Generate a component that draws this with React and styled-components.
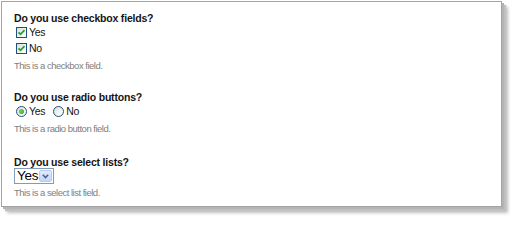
import React from "react";
import styled, { createGlobalStyle } from "styled-components";

const Global = createGlobalStyle`
  html, body { margin: 0; padding: 0; background: #ffffff; }
  body { font-family: "Liberation Sans", Arial, sans-serif; }
`;

const Page = styled.div`
  width: 511px;
  height: 216px;
  padding: 1px 0 0 1px;
  box-sizing: border-box;
  background: #fff;
`;

const Panel = styled.div`
  box-sizing: border-box;
  width: 501px;
  height: 206px;
  background: #fff;
  border: 1px solid #a4a4a4;
  box-shadow: 2px 2px 0 #b4b4b4, 4px 4px 1px #c0c0c0, 6px 6px 3px rgba(0, 0, 0, 0.25);
  padding: 10px 12px 0;
  display: flex;
  flex-direction: column;
`;

const Field = styled.div`
  display: flex;
  flex-direction: column;
  margin-bottom: ${(p) => p.$gap}px;
`;

const Heading = styled.div`
  font-family: "Liberation Sans", Arial, sans-serif;
  font-weight: bold;
  font-size: 10.5px;
  letter-spacing: -0.2px;
  line-height: 13px;
  height: 13px;
  color: #141414;
`;

const Options = styled.div`
  display: flex;
  flex-direction: ${(p) => (p.$row ? "row" : "column")};
  gap: ${(p) => (p.$row ? "8px" : "0")};
  padding-left: 2px;
  margin-top: -1px;
`;

const Option = styled.label`
  display: flex;
  align-items: center;
  gap: 2px;
  font-family: "Liberation Sans", Arial, sans-serif;
  font-size: 10.5px;
  letter-spacing: -0.3px;
  line-height: 16px;
  height: 16px;
  color: #141414;
`;

const Box = styled.span`
  box-sizing: border-box;
  width: 11px;
  height: 11px;
  border: 1px solid #1c5180;
  background: linear-gradient(135deg, #dcdcd7 0%, #f4f4f2 60%, #ffffff 100%);
  display: flex;
  align-items: center;
  justify-content: center;
`;

const Round = styled.span`
  box-sizing: border-box;
  width: 11px;
  height: 11px;
  border-radius: 50%;
  border: 1px solid #1c5180;
  background: linear-gradient(135deg, #d9d9d4 0%, #f6f6f4 60%, #ffffff 100%);
  display: flex;
  align-items: center;
  justify-content: center;
`;

const Dot = styled.span`
  width: 5px;
  height: 5px;
  border-radius: 50%;
  background: radial-gradient(circle at 40% 40%, #6fd75a, #21a121);
`;

const Help = styled.div`
  font-family: "Liberation Sans", Arial, sans-serif;
  font-size: 9.5px;
  letter-spacing: -0.5px;
  line-height: 10px;
  height: 10px;
  color: #808080;
  margin-top: ${(p) => p.$mt}px;
`;

const Select = styled.div`
  box-sizing: border-box;
  display: flex;
  align-items: stretch;
  width: 40px;
  height: 16px;
  border: 1px solid #7f9db9;
  background: #fff;
  margin-top: -1px;
`;

const SelectValue = styled.span`
  flex: 1;
  font-family: "Liberation Sans", Arial, sans-serif;
  font-size: 13.5px;
  line-height: 14px;
  letter-spacing: -0.2px;
  color: #000;
  padding-left: 2px;
`;

const SelectButton = styled.span`
  box-sizing: border-box;
  width: 13px;
  margin: 1px;
  border: 1px solid #b7cbf3;
  border-radius: 2px;
  background: linear-gradient(180deg, #e1eafe 0%, #c3d5fb 100%);
  display: flex;
  align-items: center;
  justify-content: center;
`;

const Check = () => (
  <svg width="9" height="9" viewBox="0 0 9 9">
    <path d="M1.5 4.3 L3.5 6.3 L7.5 2.2" fill="none" stroke="#21a121" strokeWidth="1.7" />
  </svg>
);

const Chevron = () => (
  <svg width="7" height="5" viewBox="0 0 7 5">
    <path d="M0.8 0.8 L3.5 3.6 L6.2 0.8" fill="none" stroke="#4d6185" strokeWidth="1.5" />
  </svg>
);

export default function App() {
  return (
    <>
      <Global />
      <Page>
        <Panel>
          <Field $gap={20}>
            <Heading>Do you use checkbox fields?</Heading>
            <Options>
              <Option>
                <Box>
                  <Check />
                </Box>
                Yes
              </Option>
              <Option>
                <Box>
                  <Check />
                </Box>
                No
              </Option>
            </Options>
            <Help $mt={5}>This is a checkbox field.</Help>
          </Field>
          <Field $gap={22}>
            <Heading>Do you use radio buttons?</Heading>
            <Options $row>
              <Option>
                <Round>
                  <Dot />
                </Round>
                Yes
              </Option>
              <Option>
                <Round />
                No
              </Option>
            </Options>
            <Help $mt={5}>This is a radio button field.</Help>
          </Field>
          <Field $gap={0}>
            <Heading>Do you use select lists?</Heading>
            <Select>
              <SelectValue>Yes</SelectValue>
              <SelectButton>
                <Chevron />
              </SelectButton>
            </Select>
            <Help $mt={4}>This is a select list field.</Help>
          </Field>
        </Panel>
      </Page>
    </>
  );
}
